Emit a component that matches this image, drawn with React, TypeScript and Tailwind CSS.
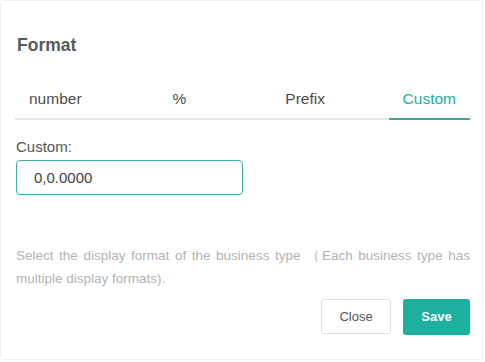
import { useState } from "react";

const tabs = [
	{ label: "number", gap: "" },
	{ label: "%", gap: "ml-[63px]" },
	{ label: "Prefix", gap: "ml-[71px]" },
	{ label: "Custom", gap: "ml-auto" },
];

const FormatDialog = () => {
	const [active, setActive] = useState(3);
	const [value, setValue] = useState("0,0.0000");

	return (
		<div className="w-[483px] h-[360px] bg-white rounded-[3px] border border-[#efefef] pl-[14px] pr-[12px] pt-[33px] text-[#555] font-['Liberation_Sans',Arial,sans-serif]">
			<h3 className="text-[17.5px] font-bold leading-[22px] text-[#5a5a5a] pl-[2px]">Format</h3>

			<div className="mt-[26px] flex border-b-2 border-[#e6e6e6]">
				{tabs.map((tab, index) => (
					<button
						key={tab.label}
						type="button"
						onClick={() => setActive(index)}
						className={`${tab.gap} -mb-[2px] px-[14px] pt-[8px] pb-[10px] text-[15.5px] leading-[18px] border-b-2 ${index === active ? "text-[#26ad9f] border-[#3aa69d]" : "text-[#4d4d4d] border-transparent"}`}
					>
						{tab.label}
					</button>
				))}
			</div>

			<label className="block mt-[18px] pl-px text-[15px] leading-[18px] text-[#555]">Custom:</label>
			<input
				autoFocus
				value={value}
				onChange={(e) => setValue(e.target.value)}
				className="mt-[4px] ml-px w-[227px] h-[35px] px-[17px] rounded-[4px] border border-[#3bb0a6] text-[15px] text-[#444] caret-[#333] outline-none"
			/>

			<p className="mt-[49px] pl-px text-[13.5px] leading-[23px] text-[#b3b3b3] text-justify">
				Select the display format of the business type （Each business type has multiple display formats).
			</p>

			<div className="mt-[9px] flex justify-end gap-[12px]">
				<button type="button" className="w-[70px] h-[35px] rounded-[3px] border border-[#dcdcdc] bg-white text-[13px] text-[#555]">
					Close
				</button>
				<button type="button" className="w-[67px] h-[36px] rounded-[3px] bg-[#1cb09e] text-[13px] font-bold text-white">
					Save
				</button>
			</div>
		</div>
	);
};

export default function App() {
	return (
		<div className="w-[485px] h-[362px] bg-white">
			<FormatDialog />
		</div>
	);
}
